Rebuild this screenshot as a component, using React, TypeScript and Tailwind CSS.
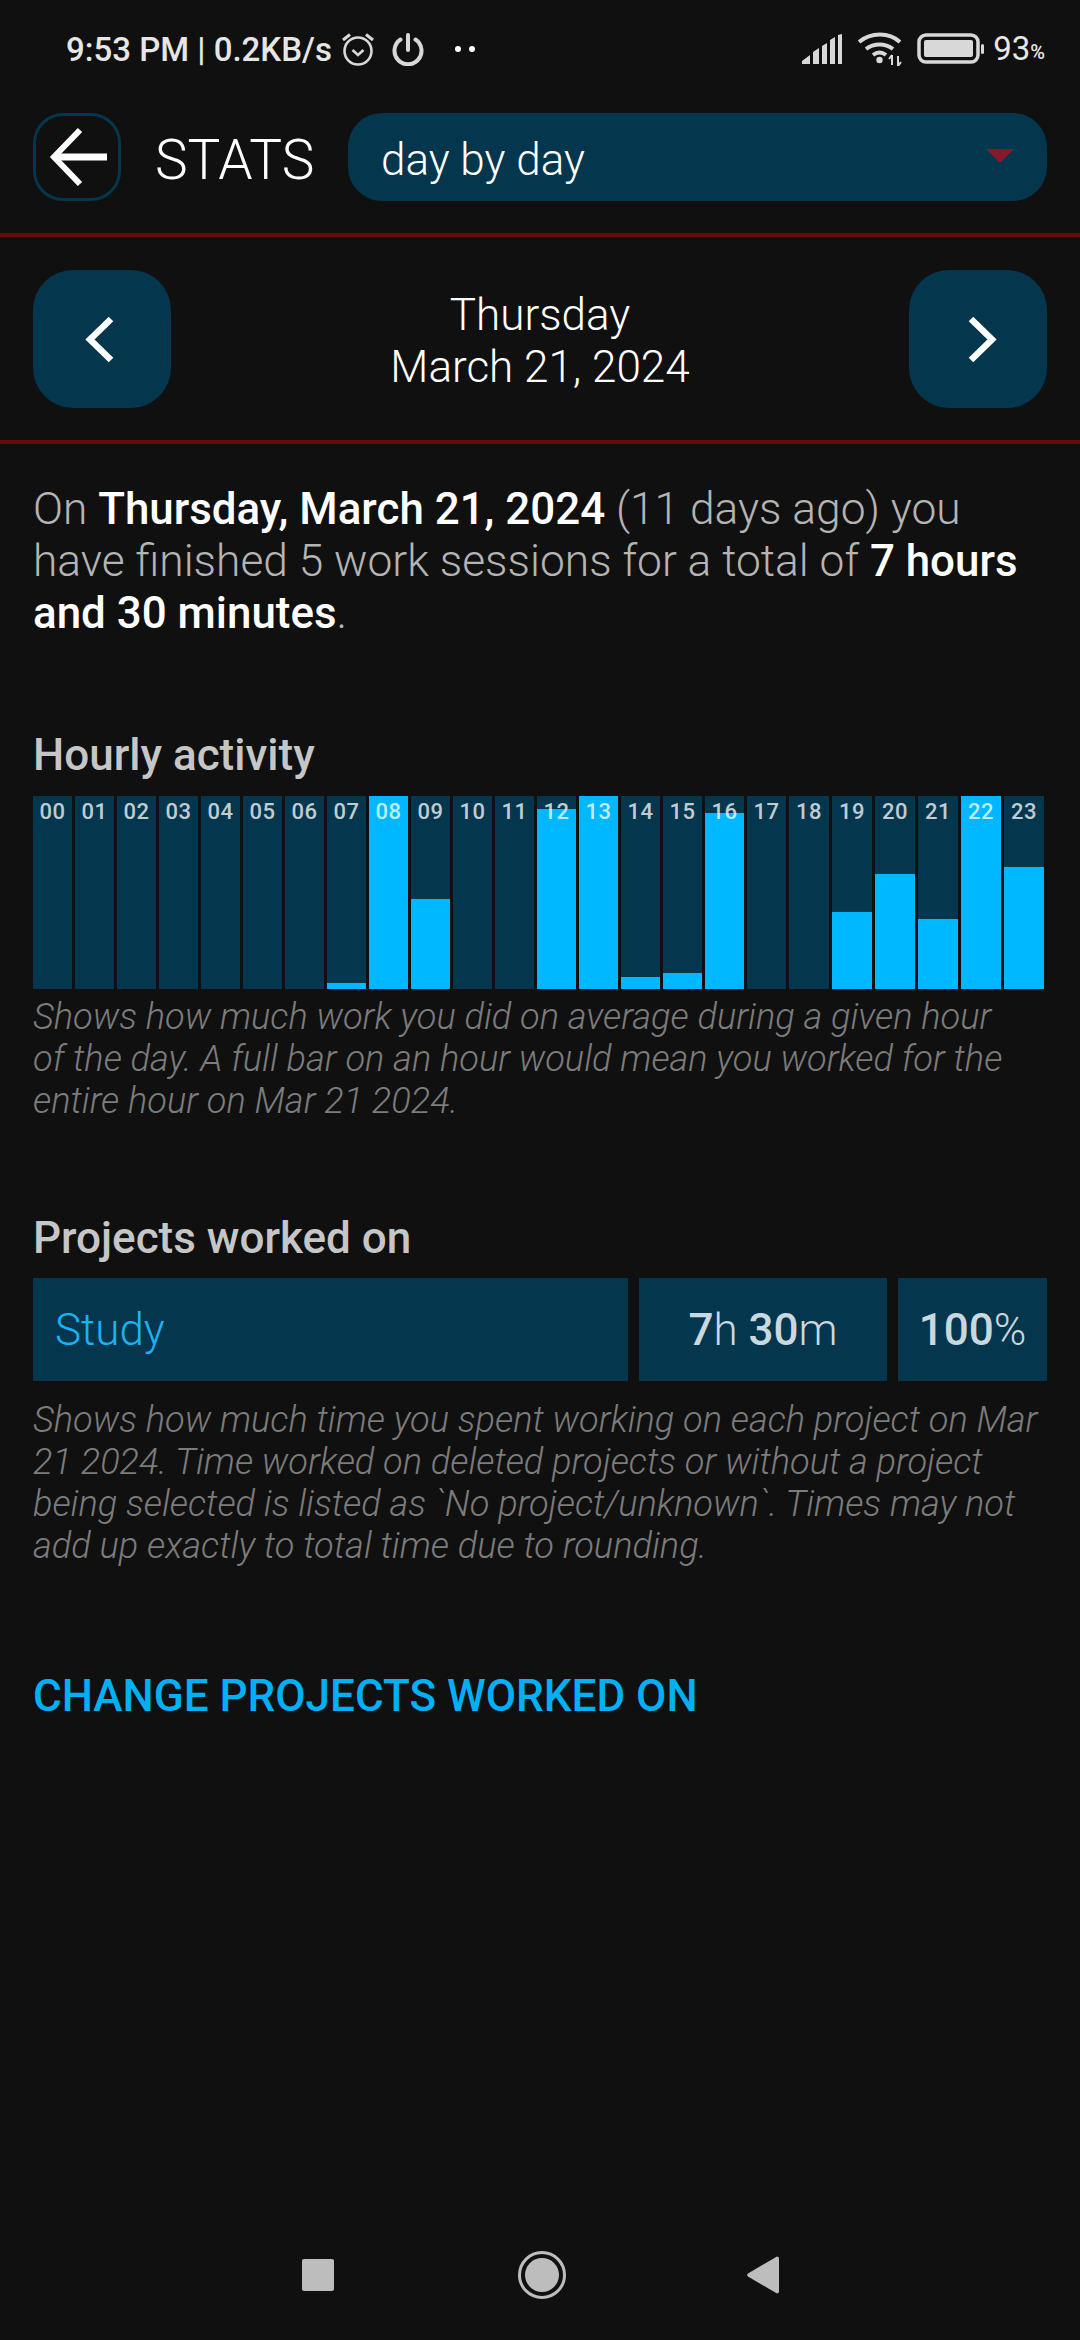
import React from 'react';

const hours = [
  { label: '00', fill: 0 }, { label: '01', fill: 0 }, { label: '02', fill: 0 }, { label: '03', fill: 0 },
  { label: '04', fill: 0 }, { label: '05', fill: 0 }, { label: '06', fill: 0 }, { label: '07', fill: 6 },
  { label: '08', fill: 193 }, { label: '09', fill: 90 }, { label: '10', fill: 0 }, { label: '11', fill: 0 },
  { label: '12', fill: 180 }, { label: '13', fill: 193 }, { label: '14', fill: 12 }, { label: '15', fill: 16 },
  { label: '16', fill: 176 }, { label: '17', fill: 0 }, { label: '18', fill: 0 }, { label: '19', fill: 77 },
  { label: '20', fill: 115 }, { label: '21', fill: 70 }, { label: '22', fill: 193 }, { label: '23', fill: 122 },
];

const StatusBar: React.FC = () => (
  <div className="h-[76px] pt-[30px] pl-[66px] pr-[35px] flex items-start justify-between text-[#e6e6e6]">
    <div className="flex items-center h-[38px]">
      <span className="mt-[1px] text-[33px] leading-[38px] font-medium whitespace-nowrap">9:53 PM | 0.2KB/s</span>
      <svg className="ml-[8px]" width="36" height="36" viewBox="0 0 36 36" fill="none" stroke="#d8d8d8" strokeWidth="2.6">
        <circle cx="18" cy="20" r="13.5" />
        <path d="M12.5 19l5.5 5 5.5-5" />
        <path d="M3 9l7-5.5M33 9l-7-5.5" strokeWidth="3" />
      </svg>
      <svg className="ml-[16px]" width="32" height="34" viewBox="0 0 32 34" fill="none" stroke="#d8d8d8" strokeWidth="4" strokeLinecap="round">
        <path d="M16 3v15" />
        <path d="M8.5 7.5a13.5 13.5 0 1 0 15 0" />
      </svg>
      <span className="ml-[31px] w-[6px] h-[6px] rounded-full bg-white" />
      <span className="ml-[8px] w-[6px] h-[6px] rounded-full bg-white" />
    </div>
    <div className="flex items-center h-[38px]">
      <svg width="40" height="30" viewBox="0 0 40 30" fill="#d8d8d8">
        <path d="M0 27l8-6v9H1a1 1 0 0 1-1-3zM11 18l6-4v16h-6zM20 12l5-3v21h-5zM28 6l5-3v27h-5zM36 1l4-1v30h-4z" />
      </svg>
      <svg className="ml-[16px]" width="50" height="34" viewBox="0 0 50 34" fill="none" stroke="#d8d8d8" strokeWidth="4">
        <path d="M1 10c12-10 30-10 41 0" />
        <path d="M8 17c8-6 19-6 27 0" />
        <path d="M15 23c4-3 9-3 13 0" />
        <circle cx="21.5" cy="28" r="3.2" fill="#d8d8d8" stroke="none" />
        <path d="M34 23v10M40 24v10M31 27l3-4M40 34l3-4" strokeWidth="2" />
      </svg>
      <svg className="ml-[9px]" width="68" height="32" viewBox="0 0 68 32" fill="none">
        <rect x="2" y="2" width="59" height="27" rx="7" stroke="#d8d8d8" strokeWidth="3.5" />
        <rect x="7" y="7" width="49" height="17" rx="2" fill="#d8d8d8" />
        <rect x="64" y="11" width="3" height="10" rx="1.5" fill="#d8d8d8" />
      </svg>
      <span className="ml-[8px] text-[33px] leading-[38px] font-normal">93</span>
      <span className="text-[20px] leading-[38px] pt-[6px] font-medium">%</span>
    </div>
  </div>
);

const Header: React.FC = () => (
  <div className="mt-[37px] flex items-center px-[33px]">
    <button className="w-[88px] h-[88px] rounded-[30px] border-[3px] border-[#04364d] flex items-center justify-center shrink-0">
      <svg width="60" height="60" viewBox="0 0 60 60" fill="none" stroke="#ffffff" strokeWidth="7">
        <path d="M33 3L7 30l26 27" strokeWidth="6" />
        <path d="M10 30h50" />
      </svg>
    </button>
    <span className="ml-[34px] mt-[5px] text-[55px] leading-[60px] font-light text-white whitespace-nowrap">STATS</span>
    <div className="ml-auto w-[699px] h-[88px] rounded-[34px] bg-[#04364d] flex items-center justify-between pl-[33px] pr-[33px]">
      <span className="mt-[5px] text-[44px] leading-[52px] font-light text-white">day by day</span>
      <svg className="mb-[2px]" width="28" height="14" viewBox="0 0 28 14" fill="#85182a">
        <path d="M0 0h28L14 14z" />
      </svg>
    </div>
  </div>
);

const DateNav: React.FC = () => (
  <div className="flex items-center justify-between px-[33px] pt-[33px] pb-[32px]">
    <button className="w-[138px] h-[138px] rounded-[40px] bg-[#04364d] flex items-center justify-center">
      <svg width="40" height="48" viewBox="0 0 40 48" fill="none" stroke="#ffffff" strokeWidth="6.5">
        <path d="M29 4L8 24.5 29 45" />
      </svg>
    </button>
    <div className="mt-[3px] text-center text-white text-[44px] leading-[52px] font-light">
      <div>Thursday</div>
      <div>March 21, 2024</div>
    </div>
    <button className="w-[138px] h-[138px] rounded-[40px] bg-[#04364d] flex items-center justify-center">
      <svg width="40" height="48" viewBox="0 0 40 48" fill="none" stroke="#ffffff" strokeWidth="6.5">
        <path d="M13 4l21 20.5L13 45" />
      </svg>
    </button>
  </div>
);

const Divider: React.FC = () => <div className="h-[4px] bg-[#690b0b]" />;

const HourlyChart: React.FC = () => (
  <div className="mt-[15px] flex gap-[3px] h-[193px] pr-[3px]">
    {hours.map((h, i) => (
      <div key={h.label} className={`relative bg-[#04364d] overflow-hidden ${i < 18 ? 'w-[39px]' : 'flex-1'}`}>
        <div className="absolute bottom-0 left-0 right-0 bg-[#00b8ff]" style={{ height: h.fill }} />
        <div className="absolute top-[3px] left-0 right-0 text-center text-[22px] leading-[26px] font-medium tracking-[0.4px] text-white/75">
          {h.label}
        </div>
      </div>
    ))}
  </div>
);

const App: React.FC = () => {
  return (
    <div className="w-[1080px] h-[2340px] bg-[#101010] flex flex-col font-['Roboto',sans-serif]">
      <StatusBar />
      <Header />
      <div className="mt-[32px]"><Divider /></div>
      <DateNav />
      <Divider />

      <div className="px-[33px]">
        <p className="mt-[39px] text-[44.3px] leading-[52px] font-light text-[#b4b4b4]">
          On <span className="text-[43.9px] font-medium text-white">Thursday, March 21, 2024</span> (11 days ago) you have finished 5 work sessions for a total of{' '}
          <span className="text-[43.9px] font-medium text-white">7 hours and 30 minutes</span>.
        </p>

        <h2 className="mt-[90px] text-[44px] leading-[52px] font-medium text-[#c6c6c6]">Hourly activity</h2>
        <HourlyChart />
        <p className="mt-[7px] text-[36.2px] leading-[42px] font-light italic text-[#7c7c7c]">
          Shows how much work you did on average during a given hour
          <br />
          of the day. A full bar on an hour would mean you worked for the entire hour on Mar 21 2024.
        </p>

        <h2 className="mt-[90px] text-[44px] leading-[52px] font-medium text-[#c6c6c6]">Projects worked on</h2>
        <div className="mt-[14px] flex gap-[11px] h-[103px]">
          <div className="w-[595px] bg-[#04364d] flex items-center pl-[22px] text-[44px] font-light text-[#1ab2f4]">Study</div>
          <div className="w-[248px] bg-[#04364d] flex items-center justify-center text-[44px] font-light text-[#c9d8df]">
            <span className="font-medium">7</span>h&nbsp;<span className="font-medium">30</span>m
          </div>
          <div className="flex-1 bg-[#04364d] flex items-center justify-center text-[44px] font-light text-[#c9d8df]">
            <span className="font-medium">100</span>%
          </div>
        </div>
        <p className="mt-[18px] text-[36.2px] leading-[42px] font-light italic text-[#7c7c7c]">
          Shows how much time you spent working on each project on Mar 21 2024. Time worked on deleted projects or without a project being selected is listed as `No project/unknown`. Times may not add up exactly to total time due to rounding.
        </p>

        <div className="mt-[103px] text-[44px] leading-[52px] font-medium text-[#00b0f6]">CHANGE PROJECTS WORKED ON</div>
      </div>

      <div className="mt-auto mb-[41px] h-[48px] flex items-center justify-center">
        <div className="w-[32px] h-[32px] rounded-[2px] bg-[#bdbdbd] mr-[184px]" />
        <div className="w-[48px] h-[48px] rounded-full border-[3px] border-[#bdbdbd] flex items-center justify-center">
          <div className="w-[34px] h-[34px] rounded-full bg-[#bdbdbd]" />
        </div>
        <svg className="ml-[181px]" width="32" height="38" viewBox="0 0 32 38" fill="#bdbdbd">
          <path d="M30 0.5a2 2 0 0 1 2 2v33a2 2 0 0 1-2 2L1 20.5a2 2 0 0 1 0-3z" />
        </svg>
      </div>
    </div>
  );
};

export default App;
